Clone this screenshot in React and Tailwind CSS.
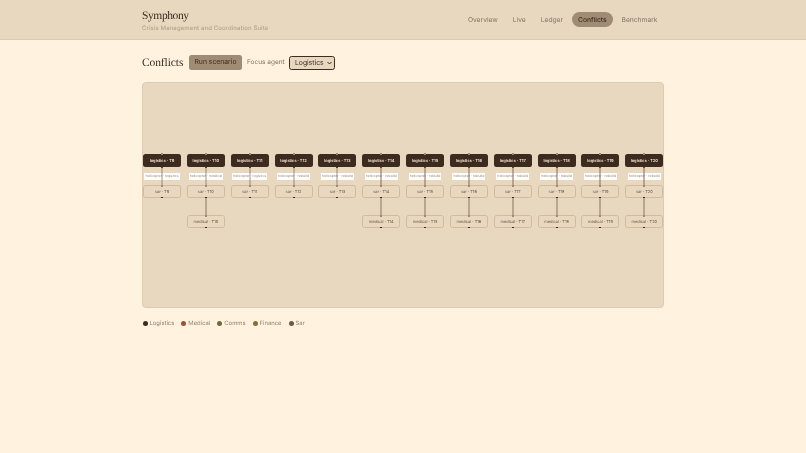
const navItems = ['Overview', 'Live', 'Ledger', 'Conflicts', 'Benchmark'];

const legend = [
  { name: 'Logistics', color: 'bg-[#3d2b1f]' },
  { name: 'Medical', color: 'bg-[#a0503a]' },
  { name: 'Comms', color: 'bg-[#6b6b3a]' },
  { name: 'Finance', color: 'bg-[#8b6b3a]' },
  { name: 'Sar', color: 'bg-[#6b5a4a]' },
];

const tasks = [
  { id: 'T9', label: 'helicopter · logistics', medical: false, hot: false },
  { id: 'T10', label: 'helicopter · medical', medical: true, hot: false },
  { id: 'T11', label: 'helicopter · logistics', medical: false, hot: false },
  { id: 'T12', label: 'helicopter · rebuild', medical: false, hot: false },
  { id: 'T13', label: 'helicopter · rebuild', medical: false, hot: false },
  { id: 'T14', label: 'helicopter · rebuild', medical: true, hot: true },
  { id: 'T15', label: 'helicopter · rebuild', medical: true, hot: true },
  { id: 'T16', label: 'helicopter · rebuild', medical: true, hot: true },
  { id: 'T17', label: 'helicopter · rebuild', medical: true, hot: true },
  { id: 'T18', label: 'helicopter · rebuild', medical: true, hot: true },
  { id: 'T19', label: 'helicopter · rebuild', medical: true, hot: true },
  { id: 'T20', label: 'helicopter · rebuild', medical: true, hot: true },
];

const Node = ({ text, dark }) => (
  <div
    className={`relative w-[38px] h-[13px] flex items-center justify-center rounded-[2.5px] text-[4px] leading-none ${
      dark
        ? 'bg-[#3d2b1f] text-[#f3e6d2] font-semibold'
        : 'bg-[#e8d8c0] border border-[#d0bb9e] text-[#6b5a4a]'
    }`}
  >
    {text}
    <span className="absolute left-1/2 -translate-x-1/2 -top-px w-[2px] h-[1.5px] bg-[#a08c74]" />
    <span className="absolute left-1/2 -translate-x-1/2 -bottom-px w-[2px] h-[1.5px] bg-[#3d2b1f]" />
  </div>
);

const TaskColumn = ({ task }) => (
  <div className="relative w-[38px] flex flex-col items-center">
    <div className="relative w-full">
      <Node text={`logistics · ${task.id}`} dark />
    </div>
    <div className="h-[18px] w-full flex items-center justify-center">
      <span className="h-[7px] px-[1px] bg-white text-[3.5px] leading-[7px] text-[#9a8a78] whitespace-nowrap">
        {task.label}
      </span>
    </div>
    <Node text={`sar · ${task.id}`} />
    {task.medical && (
      <>
        <span className="absolute left-1/2 -translate-x-1/2 top-[44px] h-[17px] w-px bg-[#8a7460]" />
        <div className="mt-[17px]">
          <Node text={`medical · ${task.id}`} />
        </div>
      </>
    )}
    <span
      className={`absolute left-1/2 -translate-x-1/2 top-[13px] h-[18px] w-px ${
        task.hot ? 'bg-[#8f6652]' : 'bg-[#7a6552] opacity-70'
      }`}
    />
  </div>
);

export default function App() {
  return (
    <div className="min-h-[453px] bg-[#fff3e0] font-['Inter',sans-serif] text-[#3d2b1f] blur-[0.3px] [text-rendering:geometricPrecision]">
      <header className="h-[40px] bg-[#e8d8c0] border-b border-[#dccbb2]">
        <div className="w-[522px] mx-auto flex items-start justify-between">
          <div className="pt-[8.5px]">
            <div className="font-['Liberation_Serif',serif] text-[11.5px] tracking-[-0.4px] leading-[14px] text-[#3d2b1f]">Symphony</div>
            <div className="mt-[2.5px] text-[6px] leading-[8px] tracking-[0.1px] font-medium text-[#b7a48b]">
              Crisis Management and Coordination Suite
            </div>
          </div>
          <nav className="flex items-center gap-[2px] mt-[12px] text-[6.7px]">
            {navItems.map((item) => (
              <span
                key={item}
                className={`h-[15px] px-[6.5px] pt-[1px] flex items-center rounded-full ${
                  item === 'Conflicts' ? 'bg-[#a08c74] text-[#3d2b1f] font-medium' : 'text-[#85725e]'
                }`}
              >
                {item}
              </span>
            ))}
          </nav>
        </div>
      </header>

      <main className="w-[522px] mx-auto pt-[15px]">
        <div className="flex items-center h-[15px]">
          <h2 className="w-[41px] font-['Liberation_Serif',serif] text-[11.5px] leading-[14px] tracking-[-0.1px] whitespace-nowrap text-[#3d2b1f]">Conflicts</h2>
          <button className="ml-[6px] h-[15px] w-[53px] rounded-[2.5px] bg-[#a08c74] text-[6.8px] text-[#3d2b1f]">Run scenario</button>
          <span className="ml-[5px] w-[38px] whitespace-nowrap text-[6.5px] text-[#85725e]">Focus agent</span>
          <div className="relative ml-[4px]">
            <select className="block h-[14px] w-[46px] pl-[5px] pt-[1px] appearance-none rounded-[2.5px] border border-[#3d2b1f] bg-[#e8d8c0] text-[6.8px] text-[#3d2b1f]">
              <option>Logistics</option>
            </select>
            <svg className="absolute right-[3px] top-[5px]" width="5" height="4" viewBox="0 0 5 4" fill="none" stroke="#3d2b1f" strokeWidth="1">
              <path d="M.5 1l2 2 2-2" />
            </svg>
          </div>
        </div>

        <div className="mt-[11.5px] h-[226px] rounded-[4px] bg-[#e8d8c0] border border-[#dccbb2] pt-[71.5px] flex gap-[5.85px]">
          {tasks.map((task) => (
            <TaskColumn key={task.id} task={task} />
          ))}
        </div>

        <div className="mt-[12px] ml-[0.5px] flex items-center gap-[7px] text-[5.9px] text-[#948270]">
          {legend.map((item) => (
            <div key={item.name} className="flex items-center gap-[2px]">
              <span className={`w-[5px] h-[5px] mb-[1px] rounded-full ${item.color}`} />
              {item.name}
            </div>
          ))}
        </div>
      </main>
    </div>
  );
}
